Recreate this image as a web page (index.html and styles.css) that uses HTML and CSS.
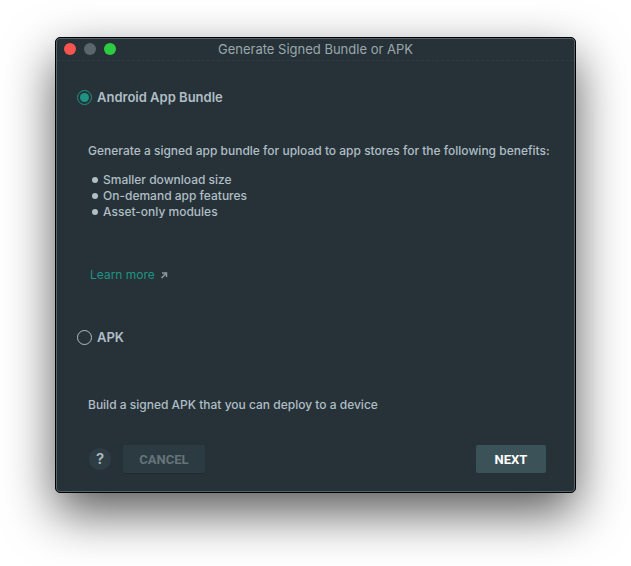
FILE: index.html
```html
<!DOCTYPE html>
<html lang="en">
<head>
<meta charset="utf-8">
<meta name="viewport" content="width=device-width, initial-scale=1">
<title>Generate Signed Bundle or APK</title>
<link rel="stylesheet" href="styles.css">
</head>
<body>
<form class="dialog" role="dialog" aria-labelledby="dialog-title">
  <header class="titlebar">
    <div class="lights">
      <button type="button" class="light light-close" aria-label="Close"></button>
      <button type="button" class="light light-minimize" aria-label="Minimize" disabled></button>
      <button type="button" class="light light-zoom" aria-label="Zoom"></button>
    </div>
    <h1 class="title" id="dialog-title">Generate Signed Bundle or APK</h1>
  </header>
  <main class="content">
    <section class="option">
      <div class="choice">
        <input class="radio" type="radio" name="format" id="bundle" checked>
        <label for="bundle">Android App Bundle</label>
      </div>
      <div class="details">
        <p class="text">Generate a signed app bundle for upload to app stores for the following benefits:</p>
        <ul class="benefits">
          <li>Smaller download size</li>
          <li>On-demand app features</li>
          <li>Asset-only modules</li>
        </ul>
        <a class="learn" href="#">Learn more
          <svg class="arrow" viewBox="0 0 8 8" width="8" height="8" aria-hidden="true"><path d="M2 2H6.500V6M6.500 2L1.500 7" fill="none" stroke="currentColor" stroke-width="1.500"/></svg>
        </a>
      </div>
    </section>
    <section class="option">
      <div class="choice">
        <input class="radio" type="radio" name="format" id="apk">
        <label for="apk">APK</label>
      </div>
      <div class="details">
        <p class="text">Build a signed APK that you can deploy to a device</p>
      </div>
    </section>
  </main>
  <footer class="actions">
    <button type="button" class="help" aria-label="Help">?</button>
    <button type="button" class="button cancel">CANCEL</button>
    <button type="submit" class="button next">NEXT</button>
  </footer>
</form>
</body>
</html>
```

FILE: styles.css
```css
* {
  box-sizing: border-box;
}

body {
  display: flex;
  min-height: 100vh;
  margin: 0;
  padding: 37px 55px 73px;
  background: #fff;
  font: 500 12px/16px Inter, "Liberation Sans", sans-serif;
  color: #b0bec5;
}

.dialog {
  display: flex;
  flex: 1;
  flex-direction: column;
  min-width: 0;
  border: 1px solid #000;
  border-radius: 5px;
  background: #263238;
  box-shadow: inset 0 0 0 1px #53646a, 0 20px 50px rgba(0, 0, 0, 0.65);
}

.titlebar {
  display: grid;
  grid-template-columns: 1fr auto 1fr;
  align-items: center;
  height: 23px;
  margin: 0 1px;
  padding: 0 7px;
  border-bottom: 1px dashed #2c3c44;
}

.lights {
  display: flex;
  gap: 8px;
}

.light {
  width: 12px;
  height: 12px;
  padding: 0;
  border: 0;
  border-radius: 50%;
}

.light-close {
  background: #f6544f;
}

.light-minimize {
  background: #59666c;
}

.light-zoom {
  background: #2dcb42;
}

.title {
  margin: 0;
  font-size: 13px;
  font-weight: 400;
  color: #9ba8ad;
}

.content {
  display: flex;
  flex: 1;
  flex-direction: column;
  gap: 46px;
  padding: 28px 20px 0 21px;
}

.choice {
  display: flex;
  align-items: center;
  gap: 5px;
  font-size: 13px;
  font-weight: 600;
}

.radio {
  display: grid;
  place-items: center;
  width: 15px;
  height: 15px;
  margin: 0;
  appearance: none;
  border: 1px solid #b0bec5;
  border-radius: 50%;
}

.radio:checked {
  border-color: #1f9484;
}

.radio:checked::before {
  width: 9px;
  height: 9px;
  border-radius: 50%;
  background: #1f9484;
  content: "";
}

.details {
  padding: 38px 0 0 11px;
}

.option + .option .details {
  padding-top: 52px;
}

.text {
  margin: 0;
  white-space: nowrap;
}

.benefits {
  margin: 13px 0 47px;
  padding: 0 0 0 4px;
  list-style: none;
}

.benefits li {
  display: flex;
  align-items: center;
  gap: 5px;
}

.benefits li::before {
  width: 6px;
  height: 6px;
  border-radius: 50%;
  background: #b0bec5;
  content: "";
}

.learn {
  display: inline-flex;
  align-items: center;
  gap: 5px;
  margin-left: 2px;
  font-weight: 400;
  color: #1f9484;
  text-decoration: none;
}

.arrow {
  color: #8b999f;
}

.actions {
  display: flex;
  align-items: center;
  padding: 0 29px 19px 33px;
}

.help {
  width: 22px;
  height: 22px;
  margin-right: 12px;
  padding: 0;
  border: 0;
  border-radius: 50%;
  background: #2e3c43;
  font: 600 15px/22px Inter, sans-serif;
  color: #b0bec5;
}

.button {
  height: 28px;
  padding: 1px 0 0;
  border: 0;
  border-radius: 2px;
  font: 700 13px/27px Roboto, sans-serif;
}

.cancel {
  width: 82px;
  background: #2c3b42;
  box-shadow: 0 1px 1px #222c31;
  color: #667479;
}

.next {
  width: 70px;
  margin-left: auto;
  background: #3c5259;
  color: #fff;
}
```
